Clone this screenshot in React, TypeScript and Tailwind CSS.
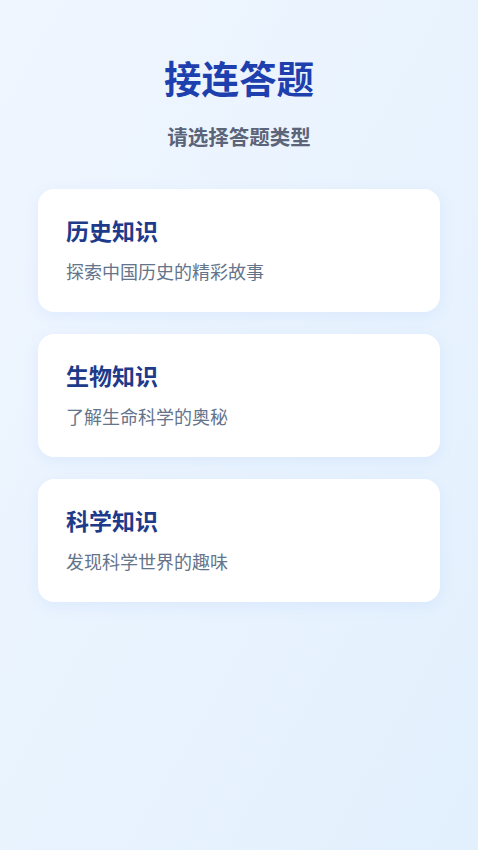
const CATEGORIES = [
  { key: "history", title: "历史知识", desc: "探索中国历史的精彩故事" },
  { key: "biology", title: "生物知识", desc: "了解生命科学的奥秘" },
  { key: "science", title: "科学知识", desc: "发现科学世界的趣味" },
] as const;

export default function App() {
  return (
    <div
      className="min-h-[850px] w-full bg-gradient-to-br from-[#f0f6ff] to-[#e2f0fd] px-[38px] pt-[55px]"
      style={{ fontFamily: '"Noto Sans CJK SC", "Noto Sans", sans-serif' }}
    >
      <h1 className="text-center text-[37.5px] leading-[44px] font-bold text-[#1e40af]">接连答题</h1>
      <p className="mt-[23px] text-center text-[20.5px] leading-[28px] font-semibold text-[#5b6478]">请选择答题类型</p>

      <div className="mt-[39px] flex flex-col gap-[22px]">
        {CATEGORIES.map((c) => (
          <button
            key={c.key}
            className="w-full rounded-2xl bg-white px-[28px] pt-[25px] pb-[29px] text-left shadow-[0_4px_16px_rgba(59,130,246,0.08)]"
          >
            <div className="text-[23px] leading-[32px] font-bold text-[#1e3a8a]">{c.title}</div>
            <div className="mt-[13px] text-[18px] leading-[24px] text-[#64748b]">{c.desc}</div>
          </button>
        ))}
      </div>
    </div>
  );
}
